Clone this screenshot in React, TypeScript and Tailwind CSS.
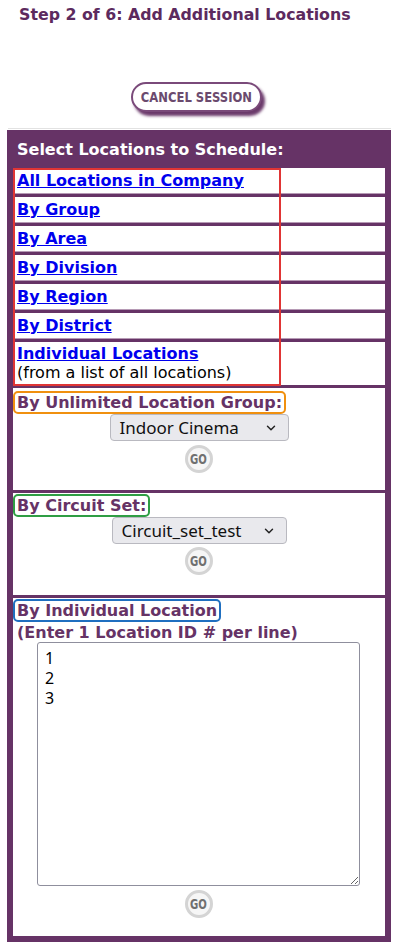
import { ChevronDown } from "lucide-react";

const purple = "bg-[#663366]";

function GoButton() {
    return (
        <div className="flex justify-center">
            <div className="w-[28px] h-[28px] rounded-full border-[3px] border-[#d4d4d4] bg-[#f6f6f6] flex items-center justify-center">
                <span className="text-[14px] font-bold text-[#707070] [font-family:'DejaVu_Sans_Condensed',sans-serif] [transform:scaleX(0.8)]">GO</span>
            </div>
        </div>
    );
}

function Dropdown({ label, width }: { label: string; width: string }) {
    return (
        <div className="flex justify-center">
            <div className={`${width} h-[27px] bg-[#e9e9ed] border border-[#b9b9c0] rounded-[4px] flex items-center justify-between pl-[9px] pr-[10px]`}>
                <span className="text-[17px] text-[#111] [font-family:'Noto_Sans',sans-serif]">{label}</span>
                <ChevronDown size={14} strokeWidth={2.5} className="text-[#222]" />
            </div>
        </div>
    );
}

const links = ["All Locations in Company", "By Group", "By Area", "By Division", "By Region", "By District"];

export default function App() {
    return (
        <div className="w-[399px] min-h-[951px] bg-white [font-family:'DejaVu_Sans',Verdana,sans-serif]">
            {/* Title */}
            <div className="pl-[19px] pt-[3px] h-[76px]">
                <h1 className="text-[15.8px] font-bold text-[#5c2a5e]">Step 2 of 6: Add Additional Locations</h1>
            </div>

            {/* Cancel button */}
            <div className="flex justify-center h-[52px]">
                <button className="w-[131px] h-[30px] mt-[6px] -ml-[6px] rounded-full border-2 border-[#7a4a7a] bg-white shadow-[3px_4px_3px_#6b3a6b] flex items-center justify-center">
                    <span className="text-[14px] font-bold text-[#6b4a6e] [font-family:'DejaVu_Sans_Condensed',sans-serif] [transform:scaleX(0.92)]">CANCEL SESSION</span>
                </button>
            </div>
            <div className="mx-[8px] h-px bg-[#e2e2e2] mb-[1px]" />

            {/* Panel */}
            <div className={`ml-[7px] w-[384px] ${purple} px-[6px] pb-[6px]`}>
                <div className="h-[38px] flex items-center pl-[4px] pt-[2px]">
                    <span className="text-[16px] font-bold text-white">Select Locations to Schedule:</span>
                </div>

                <div className="flex flex-col gap-[3px]">
                    {/* Link rows */}
                    <div className="relative flex flex-col gap-[3px]">
                        {links.map((l) => (
                            <div key={l} className="h-[26px] bg-white border-b border-[#b69ab5] flex items-center pl-[4px]">
                                <a href="#" className="text-[16px] font-bold text-[#0000ee] underline">{l}</a>
                            </div>
                        ))}
                        <div className="h-[43px] bg-white pl-[4px] pt-[2px] leading-[19px]">
                            <a href="#" className="text-[16px] font-bold text-[#0000ee] underline">Individual Locations</a>
                            <div className="text-[16px] text-black">(from a list of all locations)</div>
                        </div>
                        <div className="absolute left-0 top-0 w-[268px] h-[218px] border-[2.5px] border-[#e03535] pointer-events-none" />
                    </div>

                    {/* Unlimited location group */}
                    <div className="h-[102px] bg-white pt-[3px]">
                        <span className="inline-block border-2 border-[#f0900f] rounded-[5px] px-[2px] leading-[19px] text-[16px] font-bold text-[#663366]">By Unlimited Location Group:</span>
                        <div className="-mt-[1px] mb-[4px]">
                            <Dropdown label="Indoor Cinema" width="w-[179px]" />
                        </div>
                        <GoButton />
                    </div>

                    {/* Circuit set */}
                    <div className="h-[102px] bg-white pt-[1px]">
                        <span className="inline-block border-2 border-[#2f9e44] rounded-[5px] px-[2px] leading-[19px] text-[16px] font-bold text-[#663366]">By Circuit Set:</span>
                        <div className="-mt-[1px] mb-[3px]">
                            <Dropdown label="Circuit_set_test" width="w-[175px]" />
                        </div>
                        <GoButton />
                    </div>

                    {/* Individual location */}
                    <div className="h-[338px] bg-white pt-[1px]">
                        <span className="inline-block border-2 border-[#1f6fc0] rounded-[5px] px-[2px] leading-[19px] text-[16px] font-bold text-[#663366]">By Individual Location</span>
                        <div className="pl-[4px] text-[16px] font-bold text-[#663366] leading-[19px]">(Enter 1 Location ID # per line)</div>
                        <div className="pl-[24px]">
                            <textarea
                                defaultValue={"1\n2\n3"}
                                className="w-[323px] h-[244px] border border-[#8f8f9d] rounded-[3px] px-[7px] py-[5px] text-[16px] leading-[20px] text-black [font-family:'Noto_Sans',sans-serif] resize-y"
                            />
                        </div>
                        <div className="-mt-[3px]">
                            <GoButton />
                        </div>
                    </div>
                </div>
            </div>
        </div>
    );
}
